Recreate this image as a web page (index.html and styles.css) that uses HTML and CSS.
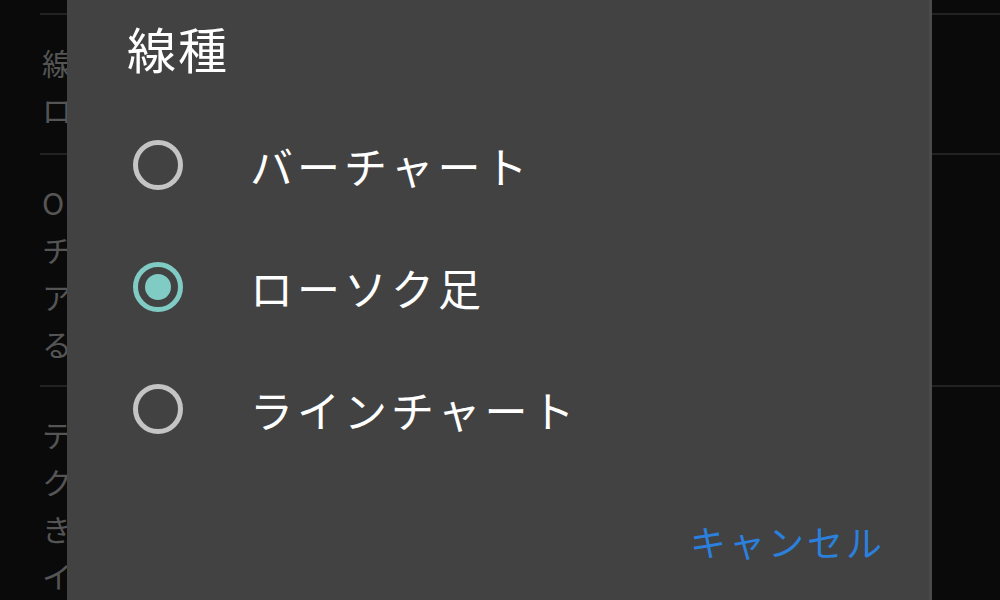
FILE: index.html
```html
<!DOCTYPE html>
<html lang="ja">
<head>
<meta charset="utf-8">
<link rel="stylesheet" href="styles.css">
</head>
<body>
<div class="settings">
  <div class="section">
    <div class="line">線種</div>
    <div class="line">ローソク足</div>
  </div>
  <div class="section">
    <div class="line">OHLC</div>
    <div class="line">チャート</div>
    <div class="line">アイコン</div>
    <div class="line">ると</div>
  </div>
  <div class="section">
    <div class="line">テクニカル</div>
    <div class="line">クロス</div>
    <div class="line">きます</div>
    <div class="line">インジ</div>
  </div>
</div>

<div class="dialog">
  <div class="dialog-title">線種</div>
  <div class="options">
    <div class="option">
      <span class="radio"></span>
      <span class="label">バーチャート</span>
    </div>
    <div class="option">
      <span class="radio checked"></span>
      <span class="label">ローソク足</span>
    </div>
    <div class="option">
      <span class="radio"></span>
      <span class="label">ラインチャート</span>
    </div>
  </div>
  <div class="actions">
    <span class="btn">キャンセル</span>
  </div>
</div>
</body>
</html>
```
FILE: styles.css
```css
html, body {
  margin: 0;
  padding: 0;
}
body {
  width: 1000px;
  height: 600px;
  overflow: hidden;
  background: #0a0a0a;
  font-family: "Noto Sans CJK JP", "Noto Sans", sans-serif;
  position: relative;
}
.settings {
  margin-left: 40px;
  padding-top: 13px;
}
.section {
  border-top: 2px solid #222222;
  padding: 24px 0 18px 2px;
}
.section:first-child {
  padding-bottom: 20px;
}
.line {
  color: #555555;
  font-size: 30px;
  line-height: 47px;
  white-space: nowrap;
  overflow: hidden;
}
.dialog {
  position: absolute;
  left: 67px;
  top: 0;
  width: 862px;
  height: 600px;
  background: #424242;
  border-right: 3px solid #4a4a4a;
  box-sizing: content-box;
  display: flex;
  flex-direction: column;
}
.dialog-title {
  color: #ffffff;
  font-size: 49px;
  line-height: 60px;
  margin-top: 18px;
  padding-left: 60px;
  letter-spacing: 2px;
}
.options {
  margin-top: 26px;
  display: flex;
  flex-direction: column;
}
.option {
  height: 122px;
  display: flex;
  align-items: center;
  padding-left: 66px;
}
.radio {
  width: 50px;
  height: 50px;
  box-sizing: border-box;
  border: 5px solid #c4c4c4;
  border-radius: 50%;
  flex: none;
  position: relative;
}
.radio.checked {
  border-color: #80cbc4;
}
.radio.checked::after {
  content: "";
  position: absolute;
  left: 7px;
  top: 7px;
  width: 26px;
  height: 26px;
  border-radius: 50%;
  background: #80cbc4;
}
.label {
  margin-left: 67px;
  color: #ffffff;
  font-size: 43px;
  letter-spacing: 4px;
  line-height: 60px;
}
.actions {
  margin-top: 46px;
  display: flex;
  justify-content: flex-end;
  padding-right: 44px;
}
.btn {
  color: #2a80dc;
  font-size: 36px;
  line-height: 50px;
  letter-spacing: 3px;
}
```
